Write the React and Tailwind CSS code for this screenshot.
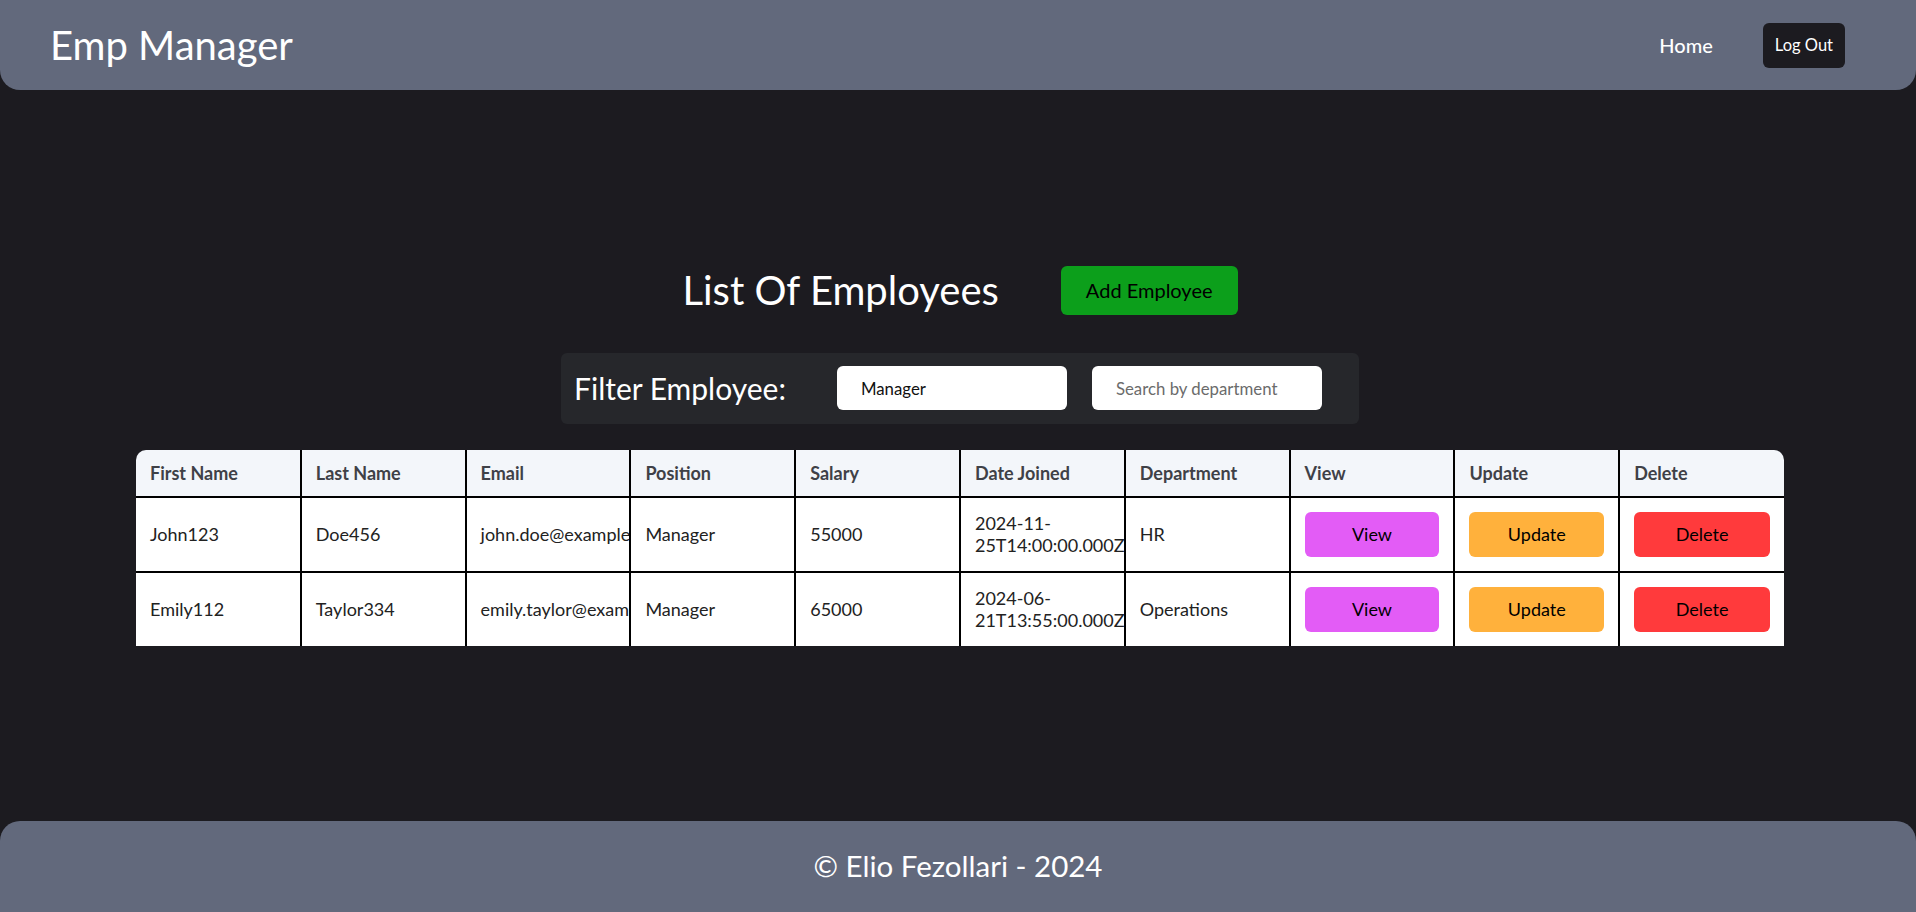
import React, { useState } from 'react';

const employees = [
	{
		firstName: 'John123',
		lastName: 'Doe456',
		email: 'john.doe@example.com',
		position: 'Manager',
		salary: 55000,
		dateJoined: '2024-11-25T14:00:00.000Z',
		department: 'HR',
	},
	{
		firstName: 'Emily112',
		lastName: 'Taylor334',
		email: 'emily.taylor@example.com',
		position: 'Manager',
		salary: 65000,
		dateJoined: '2024-06-21T13:55:00.000Z',
		department: 'Operations',
	},
];

const columns = [
	'First Name',
	'Last Name',
	'Email',
	'Position',
	'Salary',
	'Date Joined',
	'Department',
	'View',
	'Update',
	'Delete',
];

const cell = 'border-2 border-black px-[14px] py-[14px] overflow-hidden';

function Header() {
	return (
		<header className="h-[90px] shrink-0 bg-[#62697c] rounded-b-[20px] flex items-center justify-between pl-[50px] pr-[71px]">
			<h1 className="text-[40px] text-white leading-none">Emp Manager</h1>
			<nav className="flex items-center gap-[50px]">
				<a className="text-[20px] text-white font-medium" href="#">
					Home
				</a>
				<button
					type="button"
					className="h-[45px] px-[12px] rounded-md bg-[#1c1b20] text-white text-[16.5px]"
				>
					Log Out
				</button>
			</nav>
		</header>
	);
}

function FilterBar() {
	const [ position, setPosition ] = useState( 'Manager' );
	const [ department, setDepartment ] = useState( '' );

	return (
		<div className="mt-[38px] flex items-center bg-[#26272b] rounded-md h-[71px] pl-[13px] pr-[37px]">
			<span className="text-[30px] text-white whitespace-nowrap">
				Filter Employee:
			</span>
			<input
				className="ml-[51px] w-[230px] h-[44px] rounded-md bg-white pl-[24px] text-[16.8px] text-[#111] outline-none"
				value={ position }
				onChange={ ( e ) => setPosition( e.target.value ) }
			/>
			<input
				className="ml-[25px] w-[230px] h-[44px] rounded-md bg-white pl-[24px] text-[16.8px] text-[#111] placeholder:text-[#6b6b6b] outline-none"
				placeholder="Search by department"
				value={ department }
				onChange={ ( e ) => setDepartment( e.target.value ) }
			/>
		</div>
	);
}

function ActionButton( { label, color } ) {
	return (
		<button
			type="button"
			className={ `w-full h-[45px] rounded-md text-black text-[18px] ${ color }` }
		>
			{ label }
		</button>
	);
}

function EmployeeTable() {
	return (
		<div className="mt-[26px] w-[1648px] rounded-t-[10px] overflow-hidden">
			<table className="w-full table-fixed border-collapse border-hidden leading-[22px]">
				<thead>
					<tr className="bg-[#f3f6fa]">
						{ columns.map( ( col ) => (
							<th
								key={ col }
								className="border-2 border-black px-[14px] py-[12px] text-left text-[18px] font-bold text-[#3f4147]"
							>
								{ col }
							</th>
						) ) }
					</tr>
				</thead>
				<tbody>
					{ employees.map( ( emp ) => (
						<tr key={ emp.email } className="bg-white text-[18px] text-[#222]">
							<td className={ cell }>{ emp.firstName }</td>
							<td className={ cell }>{ emp.lastName }</td>
							<td className={ cell }>{ emp.email }</td>
							<td className={ cell }>{ emp.position }</td>
							<td className={ cell }>{ emp.salary }</td>
							<td className="border-2 border-black pl-[14px] pr-[2px] py-[14px] overflow-hidden">
								{ emp.dateJoined }
							</td>
							<td className={ cell }>{ emp.department }</td>
							<td className={ cell }>
								<ActionButton label="View" color="bg-[#e35cf6]" />
							</td>
							<td className={ cell }>
								<ActionButton label="Update" color="bg-[#ffb13c]" />
							</td>
							<td className={ cell }>
								<ActionButton label="Delete" color="bg-[#ff3a3c]" />
							</td>
						</tr>
					) ) }
				</tbody>
			</table>
		</div>
	);
}

export default function App() {
	return (
		<div
			className="h-screen flex flex-col bg-[#1c1b20] overflow-hidden"
			style={ { fontFamily: 'Lato, "Liberation Sans", sans-serif' } }
		>
			<Header />
			<main className="flex-1 flex flex-col items-center justify-center pl-[4px]">
				<div className="flex items-center gap-[62px]">
					<h2 className="text-[40px] text-white leading-[49px]">
						List Of Employees
					</h2>
					<button
						type="button"
						className="h-[49px] px-[25px] rounded-md bg-[#0c9f1b] text-black text-[20px]"
					>
						Add Employee
					</button>
				</div>
				<FilterBar />
				<EmployeeTable />
			</main>
			<footer className="h-[91px] shrink-0 bg-[#62697c] rounded-t-[20px] flex items-center justify-center">
				<p className="text-[29.5px] text-white">© Elio Fezollari - 2024</p>
			</footer>
		</div>
	);
}
